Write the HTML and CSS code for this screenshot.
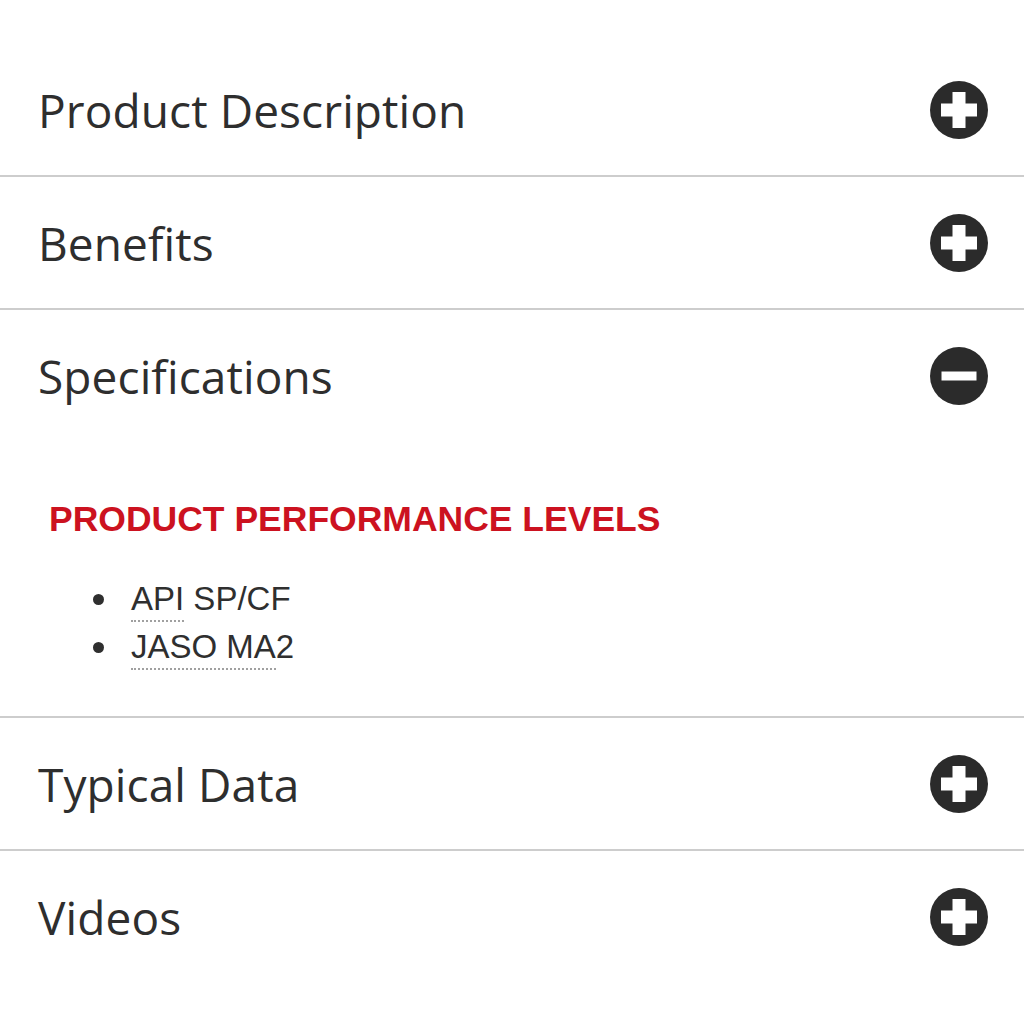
FILE: index.html
```html
<!DOCTYPE html>
<html>
<head>
<meta charset="utf-8">
<link rel="stylesheet" href="styles.css">
</head>
<body>
<div class="accordion">
  <div class="item">
    <div class="head"><span class="title">Product Description</span>
      <svg class="icon" viewBox="0 0 58 58"><circle cx="29" cy="29" r="29" fill="#2b2b2b"/><rect x="11" y="22.5" width="36" height="13" fill="#fff"/><rect x="22.5" y="11" width="13" height="36" fill="#fff"/></svg>
    </div>
  </div>
  <div class="item">
    <div class="head"><span class="title">Benefits</span>
      <svg class="icon" viewBox="0 0 58 58"><circle cx="29" cy="29" r="29" fill="#2b2b2b"/><rect x="11" y="22.5" width="36" height="13" fill="#fff"/><rect x="22.5" y="11" width="13" height="36" fill="#fff"/></svg>
    </div>
  </div>
  <div class="item">
    <div class="head"><span class="title">Specifications</span>
      <svg class="icon" viewBox="0 0 58 58"><circle cx="29" cy="29" r="29" fill="#2b2b2b"/><rect x="11.5" y="24.5" width="35" height="9" fill="#fff"/></svg>
    </div>
    <div class="body">
      <h3 class="levels">PRODUCT PERFORMANCE LEVELS</h3>
      <ul class="specs">
        <li><span><span class="abbr">API</span> SP/CF</span></li>
        <li><span><span class="abbr">JASO MA</span>2</span></li>
      </ul>
    </div>
  </div>
  <div class="item">
    <div class="head"><span class="title">Typical Data</span>
      <svg class="icon" viewBox="0 0 58 58"><circle cx="29" cy="29" r="29" fill="#2b2b2b"/><rect x="11" y="22.5" width="36" height="13" fill="#fff"/><rect x="22.5" y="11" width="13" height="36" fill="#fff"/></svg>
    </div>
  </div>
  <div class="item last">
    <div class="head"><span class="title">Videos</span>
      <svg class="icon" viewBox="0 0 58 58"><circle cx="29" cy="29" r="29" fill="#2b2b2b"/><rect x="11" y="22.5" width="36" height="13" fill="#fff"/><rect x="22.5" y="11" width="13" height="36" fill="#fff"/></svg>
    </div>
  </div>
</div>
</body>
</html>
```
FILE: styles.css
```css
html, body {
  margin: 0;
  padding: 0;
  background: #fff;
}
.accordion {
  padding-top: 44px;
}
.item {
  border-bottom: 2px solid #cdcdcd;
}
.item.last {
  border-bottom: none;
}
.head {
  height: 131px;
  display: flex;
  align-items: center;
  justify-content: space-between;
  padding: 0 36px 0 38px;
}
.title {
  font-family: "Open Sans", sans-serif;
  font-size: 46px;
  font-weight: 390;
  letter-spacing: 0.1px;
  color: #2e2e2e;
}
.icon {
  width: 58px;
  height: 58px;
  display: block;
}
.body {
  height: 275px;
  box-sizing: border-box;
  padding: 58px 0 0 49px;
  font-family: "Liberation Sans", Arial, sans-serif;
}
.levels {
  margin: 0;
  font-size: 35.5px;
  line-height: 40px;
  font-weight: 700;
  color: #cc1220;
}
.specs {
  margin: 36px 0 0 0;
  padding: 0 0 0 44px;
  font-size: 33px;
  line-height: 48px;
  color: #2f2f2f;
  list-style: none;
}
.specs li {
  display: flex;
  align-items: center;
  gap: 27px;
}
.specs li::before {
  content: "";
  width: 11px;
  height: 11px;
  border-radius: 50%;
  background: #2f2f2f;
  flex: none;
}
.abbr {
  padding-bottom: 3px;
  border-bottom: 2px dotted #a0a0a0;
}
```
